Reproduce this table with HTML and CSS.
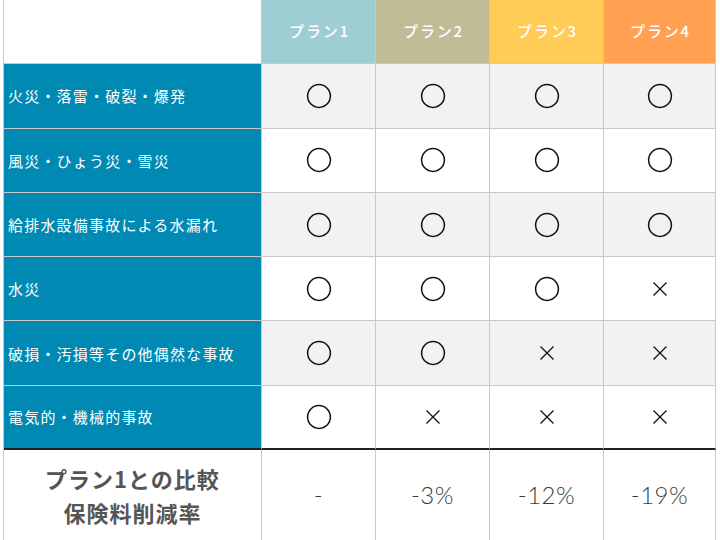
FILE: index.html
```html
<!DOCTYPE html>
<html lang="ja">
<head>
<meta charset="utf-8">
<link rel="stylesheet" href="styles.css">
</head>
<body>
<div class="table">
  <div class="cell corner"></div>
  <div class="cell head p1">プラン1</div>
  <div class="cell head p2">プラン2</div>
  <div class="cell head p3">プラン3</div>
  <div class="cell head p4">プラン4</div>

  <div class="cell label">火災・落雷・破裂・爆発</div>
  <div class="cell mark gray"><svg class="ok" viewBox="0 0 26 26"><circle cx="13" cy="13" r="11.4"/></svg></div>
  <div class="cell mark gray"><svg class="ok" viewBox="0 0 26 26"><circle cx="13" cy="13" r="11.4"/></svg></div>
  <div class="cell mark gray"><svg class="ok" viewBox="0 0 26 26"><circle cx="13" cy="13" r="11.4"/></svg></div>
  <div class="cell mark gray"><svg class="ok" viewBox="0 0 26 26"><circle cx="13" cy="13" r="11.4"/></svg></div>

  <div class="cell label">風災・ひょう災・雪災</div>
  <div class="cell mark"><svg class="ok" viewBox="0 0 26 26"><circle cx="13" cy="13" r="11.4"/></svg></div>
  <div class="cell mark"><svg class="ok" viewBox="0 0 26 26"><circle cx="13" cy="13" r="11.4"/></svg></div>
  <div class="cell mark"><svg class="ok" viewBox="0 0 26 26"><circle cx="13" cy="13" r="11.4"/></svg></div>
  <div class="cell mark"><svg class="ok" viewBox="0 0 26 26"><circle cx="13" cy="13" r="11.4"/></svg></div>

  <div class="cell label">給排水設備事故による水漏れ</div>
  <div class="cell mark gray"><svg class="ok" viewBox="0 0 26 26"><circle cx="13" cy="13" r="11.4"/></svg></div>
  <div class="cell mark gray"><svg class="ok" viewBox="0 0 26 26"><circle cx="13" cy="13" r="11.4"/></svg></div>
  <div class="cell mark gray"><svg class="ok" viewBox="0 0 26 26"><circle cx="13" cy="13" r="11.4"/></svg></div>
  <div class="cell mark gray"><svg class="ok" viewBox="0 0 26 26"><circle cx="13" cy="13" r="11.4"/></svg></div>

  <div class="cell label">水災</div>
  <div class="cell mark"><svg class="ok" viewBox="0 0 26 26"><circle cx="13" cy="13" r="11.4"/></svg></div>
  <div class="cell mark"><svg class="ok" viewBox="0 0 26 26"><circle cx="13" cy="13" r="11.4"/></svg></div>
  <div class="cell mark"><svg class="ok" viewBox="0 0 26 26"><circle cx="13" cy="13" r="11.4"/></svg></div>
  <div class="cell mark"><svg class="ng" viewBox="0 0 16 16"><path d="M1.5 1.5L14.5 14.5M14.5 1.5L1.5 14.5"/></svg></div>

  <div class="cell label">破損・汚損等その他偶然な事故</div>
  <div class="cell mark gray"><svg class="ok" viewBox="0 0 26 26"><circle cx="13" cy="13" r="11.4"/></svg></div>
  <div class="cell mark gray"><svg class="ok" viewBox="0 0 26 26"><circle cx="13" cy="13" r="11.4"/></svg></div>
  <div class="cell mark gray"><svg class="ng" viewBox="0 0 16 16"><path d="M1.5 1.5L14.5 14.5M14.5 1.5L1.5 14.5"/></svg></div>
  <div class="cell mark gray"><svg class="ng" viewBox="0 0 16 16"><path d="M1.5 1.5L14.5 14.5M14.5 1.5L1.5 14.5"/></svg></div>

  <div class="cell label last">電気的・機械的事故</div>
  <div class="cell mark last"><svg class="ok" viewBox="0 0 26 26"><circle cx="13" cy="13" r="11.4"/></svg></div>
  <div class="cell mark last"><svg class="ng" viewBox="0 0 16 16"><path d="M1.5 1.5L14.5 14.5M14.5 1.5L1.5 14.5"/></svg></div>
  <div class="cell mark last"><svg class="ng" viewBox="0 0 16 16"><path d="M1.5 1.5L14.5 14.5M14.5 1.5L1.5 14.5"/></svg></div>
  <div class="cell mark last"><svg class="ng" viewBox="0 0 16 16"><path d="M1.5 1.5L14.5 14.5M14.5 1.5L1.5 14.5"/></svg></div>

  <div class="cell summary">プラン1との比較<br>保険料削減率</div>
  <div class="cell rate">-</div>
  <div class="cell rate">-3%</div>
  <div class="cell rate">-12%</div>
  <div class="cell rate">-19%</div>
</div>
</body>
</html>
```

FILE: styles.css
```css
html, body {
  margin: 0;
  padding: 0;
  overflow: hidden;
  background: #ffffff;
}

body {
  padding-left: 3px;
  font-family: "Noto Sans CJK JP", "Noto Sans", sans-serif;
}

.table {
  display: grid;
  grid-template-columns: 258px 114px 114px 114px 112px;
  grid-template-rows: 64.3px 64.3px 64.3px 64.3px 64.3px 64.3px 64.3px 92px;
  width: 712px;
  border-left: 1px solid #c8c8c8;
}

.cell {
  box-sizing: border-box;
  border-right: 1px solid #c8c8c8;
  border-bottom: 1px solid #c8c8c8;
  display: flex;
  align-items: center;
  justify-content: center;
  background: #ffffff;
}

.corner {
  background: #ffffff;
}

.head {
  color: #ffffff;
  font-size: 15px;
  font-weight: 500;
  letter-spacing: 1.8px;
  padding-bottom: 3px;
  padding-left: 2px;
}

.p1 { background: #9ecdd4; }
.p2 { background: #c1bc95; }
.p3 { background: #ffcc57; }
.p4 { background: #ffa052; }

.label {
  background: #008ab3;
  color: #ffffff;
  justify-content: flex-start;
  padding-left: 4px;
  font-size: 15px;
  font-weight: 400;
  letter-spacing: 1.2px;
  white-space: nowrap;
}

.gray {
  background: #f2f2f2;
}

.last {
  border-bottom: 2px solid #222222;
}

.ok {
  width: 26px;
  height: 26px;
}

.ok circle {
  fill: none;
  stroke: #111111;
  stroke-width: 1.5;
}

.ng {
  width: 16px;
  height: 16px;
}

.ng path {
  fill: none;
  stroke: #111111;
  stroke-width: 1.3;
}

.summary {
  text-align: center;
  color: #555555;
  font-size: 22px;
  font-weight: 700;
  letter-spacing: 1px;
  line-height: 34px;
  padding-bottom: 2px;
}

.rate {
  font-family: "Lato", "Liberation Sans", sans-serif;
  font-weight: 300;
  font-size: 24px;
  color: #3c3c3c;
  letter-spacing: 0.5px;
  padding-bottom: 2px;
}
```
